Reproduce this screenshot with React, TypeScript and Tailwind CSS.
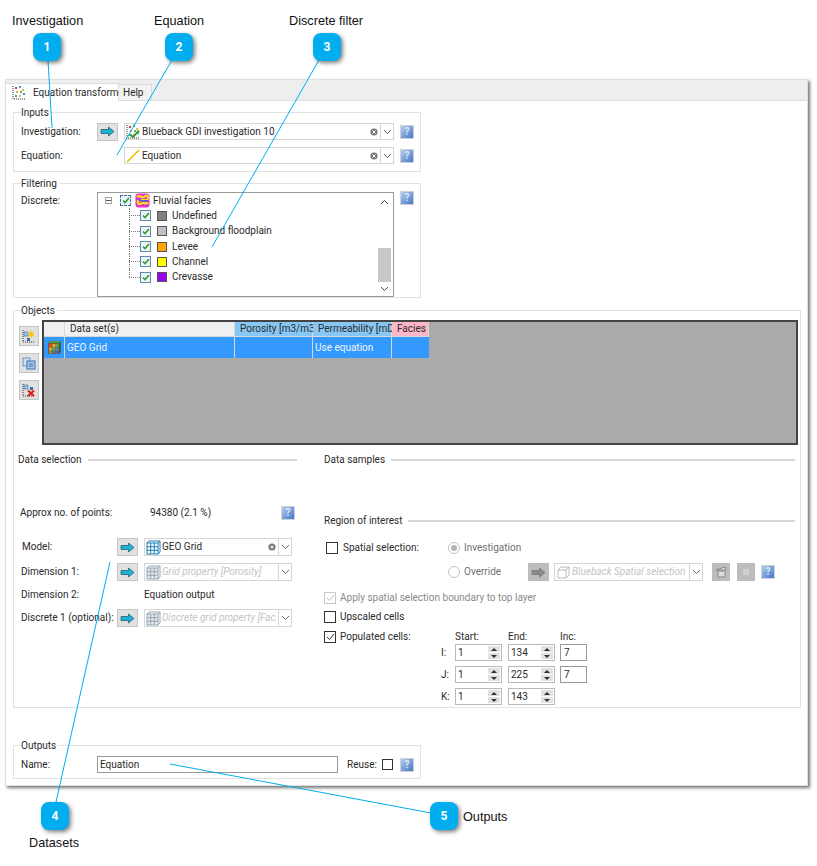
import React from "react";

const Help = () => (
  <div className="w-[14px] h-[14px] shrink-0 border border-[#d0d2d6] bg-gradient-to-br from-[#b4cbee] to-[#4478c8] flex items-center justify-center text-[10px] leading-none font-bold text-[#dfe8f6]">?</div>
);

const Arrow = ({ grey = false }: { grey?: boolean }) => (
  <div className={`w-[21px] h-[18px] shrink-0 border flex items-center justify-center ${grey ? "bg-[#bdbdbd] border-[#bdbdbd]" : "bg-[#e1e1e1] border-[#c4c4c4]"}`}>
    <svg width="15" height="11" viewBox="0 0 15 11">
      <path d="M1 3.5H8.5V1L14 5.5L8.5 10V7.5H1Z" fill={grey ? "#8a8a8a" : "#19b5d8"} stroke={grey ? "#777" : "#2b5f70"} strokeWidth="0.8" />
    </svg>
  </div>
);

const Clear = () => (
  <svg width="8" height="8" viewBox="0 0 8 8" className="shrink-0">
    <circle cx="4" cy="4" r="3.6" fill="#777" />
    <path d="M2.5 2.5L5.5 5.5M5.5 2.5L2.5 5.5" stroke="#fff" strokeWidth="1" />
  </svg>
);

const Chevron = ({ color = "#666" }: { color?: string }) => (
  <svg width="9" height="6" viewBox="0 0 9 6">
    <path d="M1 1L4.5 4.5L8 1" fill="none" stroke={color} strokeWidth="1" />
  </svg>
);

const InvestigationIcon = ({ tick = true }: { tick?: boolean }) => (
  <svg width="15" height="15" viewBox="0 0 15 15" className="shrink-0">
    <path d="M1 1V14H14" fill="none" stroke="#333" strokeWidth="1" strokeDasharray="1 1" />
    <rect x="3" y="2" width="2" height="2" fill="#e23b3b" />
    <rect x="7" y="1" width="2" height="2" fill="#35a6d8" />
    <rect x="10" y="4" width="2" height="2" fill="#e5c12d" />
    <rect x="4" y="6" width="2" height="2" fill="#f0a030" />
    <rect x="8" y="6" width="2" height="2" fill="#6ab04c" />
    <rect x="11" y="8" width="2" height="2" fill="#3c8fd0" />
    <rect x="3" y="10" width="2" height="2" fill="#35a6d8" />
    <rect x="7" y="10" width="2" height="2" fill="#e5c12d" />
    {tick && <path d="M4 10.5L7 13L13 6.5" fill="none" stroke="#3f9f3a" strokeWidth="2" />}
  </svg>
);

const FluvialIcon = () => (
  <svg width="15" height="15" viewBox="0 0 15 15" className="shrink-0">
    <rect x="0.5" y="0.5" width="14" height="14" rx="3" fill="#e62fd0" />
    <path d="M2 4C5 1 7 6 9 4S13 2 13 5 9 7 7 7 2 7 3 10 7 9 9 10 12 9 13 11" fill="none" stroke="#f7e017" strokeWidth="2.2" />
    <path d="M3 7C5 6 6 8 8 8S11 7 13 8" fill="none" stroke="#3a55d9" strokeWidth="1.4" />
  </svg>
);

const GridIcon = ({ faded = false }: { faded?: boolean }) => {
  const c = faded ? "#7b929c" : "#1b7fb5";
  return (
    <svg width="15" height="15" viewBox="0 0 15 15" className="shrink-0" opacity={faded ? 0.8 : 1}>
      <rect x="1" y="3" width="11" height="11" fill={faded ? "#dfe5e8" : "#fff"} stroke={c} />
      <path d="M4.7 3V14M8.3 3V14M1 6.7H12M1 10.3H12M1 3L3 1H14V12L12 14M12 3L14 1" fill="none" stroke={c} strokeWidth="1" />
    </svg>
  );
};

const CubeIcon = () => (
  <svg width="15" height="15" viewBox="0 0 15 15" className="shrink-0">
    <rect x="1" y="3" width="11" height="11" fill="#7a5a2a" />
    <rect x="2" y="4" width="3" height="3" fill="#d94a2b" />
    <rect x="5.5" y="4" width="3" height="3" fill="#e0b13a" />
    <rect x="9" y="4" width="2.5" height="3" fill="#5fae3e" />
    <rect x="2" y="7.5" width="3" height="3" fill="#e0a03a" />
    <rect x="5.5" y="7.5" width="3" height="3" fill="#62b04a" />
    <rect x="9" y="7.5" width="2.5" height="3" fill="#3d8fd0" />
    <rect x="2" y="11" width="3" height="2.5" fill="#5fae3e" />
    <rect x="5.5" y="11" width="3" height="2.5" fill="#3b6fd0" />
    <rect x="9" y="11" width="2.5" height="2.5" fill="#7b4bc0" />
    <path d="M1 3L3 1H14L12 3Z" fill="#4f9a45" />
    <path d="M12 3L14 1V12L12 14Z" fill="#2f6a4a" />
  </svg>
);

const Combo = ({ w, icon, text, clear = false, muted = false, h = "h-[18px]" }: { w: string; icon: React.ReactNode; text: string; clear?: boolean; muted?: boolean; h?: string }) => (
  <div className={`${w} ${h} shrink-0 border border-[#d6d6d6] bg-white flex items-center`}>
    <div className="flex-1 min-w-0 flex items-center gap-[1px] pl-[1px] pr-[2px]">
      {icon}
      <span className={`flex-1 min-w-0 whitespace-nowrap overflow-hidden ${muted ? "italic text-[#c4c4c4]" : ""}`}>{text}</span>
      {clear && <Clear />}
    </div>
    <div className="w-[13px] h-full border-l border-[#d6d6d6] flex items-center justify-center shrink-0"><Chevron /></div>
  </div>
);

const Group = ({ title, className, children }: { title: string; className: string; children: React.ReactNode }) => (
  <div className={`relative border border-[#e2e2e2] ${className}`}>
    <span className="absolute left-[7px] -top-[6px] bg-white pr-[2px] leading-[12px]">{title}</span>
    {children}
  </div>
);

const TreeCheck = ({ dashed = false }: { dashed?: boolean }) => (
  <div className={`w-[11px] h-[11px] shrink-0 flex items-center justify-center bg-[#eef3f6] border ${dashed ? "border-dashed border-[#3a6ea5]" : "border-[#5f89a8]"}`}>
    <svg width="8" height="7" viewBox="0 0 8 7"><path d="M1 3.5L3 5.5L7 1" fill="none" stroke="#2f9a3a" strokeWidth="1.6" /></svg>
  </div>
);

const TreeItem = ({ color, label, last = false }: { color: string; label: string; last?: boolean }) => (
  <div className="h-[15.3px] flex items-center relative">
    <div className={`absolute left-[30px] top-0 w-0 border-l border-dotted border-[#777] ${last ? "h-[8px]" : "h-full"}`} />
    <div className="ml-[30px] w-[11px] border-t border-dotted border-[#777]" />
    <TreeCheck />
    <div className="w-[10px] h-[10px] ml-[6px] border border-[#555]" style={{ background: color }} />
    <span className="ml-[5px]">{label}</span>
  </div>
);

const Check = ({ checked = false, disabled = false }: { checked?: boolean; disabled?: boolean }) => (
  <div className={`w-[12px] h-[12px] shrink-0 bg-white border flex items-center justify-center ${disabled ? "border-[#c8c8c8]" : "border-[#333]"}`}>
    {checked && <svg width="9" height="8" viewBox="0 0 9 8"><path d="M1 4L3.5 6.5L8 1" fill="none" stroke={disabled ? "#bbb" : "#333"} strokeWidth="1" /></svg>}
  </div>
);

const Radio = ({ on = false }: { on?: boolean }) => (
  <div className="w-[12px] h-[12px] shrink-0 rounded-full border border-[#c4c4c4] bg-white flex items-center justify-center">
    {on && <div className="w-[6px] h-[6px] rounded-full bg-[#b4b4b4]" />}
  </div>
);

const Spin = ({ v }: { v: string }) => (
  <div className="w-[47px] h-[17px] shrink-0 border border-[#b8b8b8] bg-white flex items-center pl-[2px]">
    <span className="flex-1">{v}</span>
    <div className="w-[12px] h-full mr-[1px] flex flex-col gap-[1px] py-[1px]">
      <div className="flex-1 bg-[#e1e1e1] flex items-center justify-center"><div className="border-x-[3px] border-x-transparent border-b-[3px] border-b-[#333]" /></div>
      <div className="flex-1 bg-[#e1e1e1] flex items-center justify-center"><div className="border-x-[3px] border-x-transparent border-t-[3px] border-t-[#333]" /></div>
    </div>
  </div>
);

const Inc = () => (
  <div className="w-[27px] h-[17px] shrink-0 border border-[#999] bg-white flex items-center pl-[3px]">7</div>
);

const SpinRow = ({ l, s, e, inc, cls }: { l: string; s: string; e: string; inc: boolean; cls: string }) => (
  <div className={`flex items-center h-[17px] pl-[117px] ${cls}`}>
    <span className="w-[14px]">{l}</span>
    <Spin v={s} />
    <div className="w-[6px]" />
    <Spin v={e} />
    {inc && <div className="w-[5px]" />}
    {inc && <Inc />}
  </div>
);

const Heading = ({ title, cls = "" }: { title: string; cls?: string }) => (
  <div className={`flex items-center h-[14px] gap-[6px] ${cls}`}>
    <span className="whitespace-nowrap">{title}</span>
    <div className="flex-1 h-[2px] bg-[#d8d8d8]" />
  </div>
);

const SideBtn = ({ cls, children }: { cls: string; children: React.ReactNode }) => (
  <div className={`w-[20px] h-[20px] bg-[#e1e1e1] border border-[#c4c4c4] flex items-center justify-center ${cls}`}>{children}</div>
);

const ColHead = ({ w, bg, children }: { w: string; bg: string; children: React.ReactNode }) => (
  <div className={`${w} ${bg} h-full shrink-0 border-r border-[#d8d8d8] flex items-center pl-[5px] whitespace-nowrap`}>{children}</div>
);

const Bubble = ({ n, x, y }: { n: string; x: string; y: string }) => (
  <div className={`absolute ${x} ${y} w-[28px] h-[28px] rounded-[8px] bg-[#00aeef] shadow-[2px_2px_4px_rgba(0,0,0,0.5)] flex items-center justify-center text-white font-bold text-[12px]`}>{n}</div>
);

const Note = ({ text, cls }: { text: string; cls: string }) => (
  <span className={`absolute text-[12.7px] leading-[16px] text-[#111] whitespace-nowrap font-['Liberation_Sans',Arial,sans-serif] ${cls}`}>{text}</span>
);

export default function App() {
  return (
    <div className="relative w-[817px] h-[866px] bg-white overflow-hidden pt-[79px] pl-[5px] text-[10px] leading-[12px] text-[#2a2a2a] font-['Roboto','Liberation_Sans',sans-serif]">
      <div className="w-[803px] h-[707px] bg-white border border-[#e0e0e0] shadow-[2px_2px_3px_#777]">
        {/* Tabs */}
        <div className="h-[21px] bg-[#eeeeee] border-b border-[#dcdcdc] flex items-end">
          <div className="w-[113px] h-[18px] bg-white border-r border-t border-[#dcdcdc] -mb-[1px] flex items-center pl-[6px] gap-[6px]">
            <InvestigationIcon tick={false} />
            <span className="whitespace-nowrap">Equation transformer</span>
          </div>
          <div className="w-[33px] h-[16px] bg-[#f2f2f2] border-r border-t border-[#dcdcdc] flex items-center pl-[4px]">Help</div>
        </div>

        <div className="pl-[7px]">
          {/* Inputs */}
          <Group title="Inputs" className="w-[408px] h-[60px] mt-[11px] pt-[10px] pl-[7px]">
            <div className="flex items-center h-[17px]">
              <span className="w-[76px]">Investigation:</span>
              <Arrow />
              <div className="w-[6px]" />
              <Combo w="w-[270px]" h="h-[17px]" icon={<InvestigationIcon />} text="Blueback GDI investigation 10" clear />
              <div className="w-[6px]" />
              <Help />
            </div>
            <div className="flex items-center h-[17px] mt-[7px]">
              <span className="w-[103px]">Equation:</span>
              <Combo
                w="w-[270px]"
                h="h-[17px]"
                icon={<svg width="15" height="15" viewBox="0 0 15 15" className="shrink-0"><path d="M1 14L13 2" stroke="#f5b800" strokeWidth="1.6" /></svg>}
                text="Equation"
                clear
              />
              <div className="w-[6px]" />
              <Help />
            </div>
          </Group>

          {/* Filtering */}
          <Group title="Filtering" className="w-[408px] h-[115px] mt-[11px] pt-[8px] pl-[7px]">
            <div className="flex items-start">
              <span className="w-[76px] pt-[3px]">Discrete:</span>
              <div className="w-[297px] h-[105px] shrink-0 border border-[#999] pl-[1px] flex">
                <div className="flex-1">
                  <div className="h-[15.3px] flex items-center relative pl-[6px]">
                    <div className="w-[7px] h-[7px] border border-[#9aa5b1] flex items-center justify-center mr-[8px]"><div className="w-[5px] h-[1px] bg-[#555]" /></div>
                    <TreeCheck dashed />
                    <div className="w-[4px]" />
                    <FluvialIcon />
                    <span className="ml-[3px]">Fluvial facies</span>
                  </div>
                  <TreeItem color="#808080" label="Undefined" />
                  <TreeItem color="#c0c0c0" label="Background floodplain" />
                  <TreeItem color="#ffa500" label="Levee" />
                  <TreeItem color="#ffff00" label="Channel" />
                  <TreeItem color="#9900ee" label="Crevasse" last />
                </div>
                <div className="w-[13px] mr-[2px] flex flex-col items-center">
                  <div className="h-[18px] flex items-center justify-center rotate-180"><Chevron color="#444" /></div>
                  <div className="h-[37px]" />
                  <div className="w-full h-[34px] bg-[#c8c8c8]" />
                  <div className="flex-1 flex items-center justify-center"><Chevron color="#444" /></div>
                </div>
              </div>
              <div className="w-[6px]" />
              <div className="-mt-[1px]"><Help /></div>
            </div>
          </Group>

          {/* Objects */}
          <Group title="Objects" className="w-[788px] h-[398px] mt-[12px] pt-[9px]">
            <div className="flex pl-[5px]">
              <div className="w-[20px] pt-[6px]">
                <SideBtn cls="">
                  <svg width="14" height="14" viewBox="0 0 14 14"><path d="M1 1V13H13" fill="none" stroke="#333" strokeDasharray="1 1" /><rect x="2" y="3" width="4" height="4" fill="#9cc3ea" stroke="#3a6ea5" strokeWidth="0.6" /><path d="M9 1L10 4L13 3L11 5.500L13 8L10 7L9 10L8 7L5 8L7 5.500L5 3L8 4Z" fill="#f5c518" /><rect x="5" y="9" width="3" height="3" fill="#3a6ea5" /></svg>
                </SideBtn>
                <SideBtn cls="mt-[7px]">
                  <svg width="14" height="14" viewBox="0 0 14 14"><rect x="1" y="2" width="7" height="8" fill="#cfe0f4" stroke="#6f93bd" /><rect x="5" y="5" width="8" height="8" fill="#a9c7ea" stroke="#3f6ea8" /><path d="M7 8H11M7 10H11" stroke="#3f6ea8" /></svg>
                </SideBtn>
                <SideBtn cls="mt-[7px]">
                  <svg width="14" height="14" viewBox="0 0 14 14"><path d="M1 1V13H13" fill="none" stroke="#333" strokeDasharray="1 1" /><rect x="2" y="2" width="4" height="4" fill="#9cc3ea" stroke="#3a6ea5" strokeWidth="0.6" /><rect x="8" y="4" width="3" height="3" fill="#3a6ea5" /><path d="M6 7.500L12 13M12 7.500L6 13" stroke="#e01818" strokeWidth="2" /></svg>
                </SideBtn>
              </div>
              <div className="w-[756px] h-[125px] ml-[3px] border-2 border-[#444] bg-[#ababab]">
                <div className="flex h-[14px] items-stretch">
                  <ColHead w="w-[21px]" bg="bg-[#f0f0f0]"><span /></ColHead>
                  <ColHead w="w-[170px]" bg="bg-[#f0f0f0]">Data set(s)</ColHead>
                  <ColHead w="w-[78px]" bg="bg-[#87c7f5]">Porosity [m3/m3]</ColHead>
                  <ColHead w="w-[79px]" bg="bg-[#87c7f5]">Permeability [mD]</ColHead>
                  <ColHead w="w-[37px]" bg="bg-[#ffb6c8]">Facies</ColHead>
                </div>
                <div className="flex h-[22px] w-[385px] bg-[#3399ff] text-[#f0f6ff] border-t border-[#d8d8d8]">
                  <div className="w-[21px] border-r border-[#d8d8d8] flex items-center justify-center"><CubeIcon /></div>
                  <div className="w-[170px] border-r border-[#d8d8d8] flex items-center pl-[2px]">GEO Grid</div>
                  <div className="w-[78px] border-r border-[#d8d8d8]" />
                  <div className="w-[79px] border-r border-[#d8d8d8] flex items-center pl-[2px]">Use equation</div>
                </div>
              </div>
            </div>

            <div className="flex mt-[8px] ml-[4px]">
              {/* Data selection */}
              <div className="w-[279px]">
                <Heading title="Data selection" />
                <div className="flex items-center h-[15px] mt-[38px] pl-[2px]">
                  <span className="w-[130px]">Approx no. of points:</span>
                  <span className="w-[131px]">94380 (2.1 %)</span>
                  <Help />
                </div>
                <div className="flex items-center h-[18px] mt-[18px] pl-[4px]">
                  <span className="w-[95px]">Model:</span>
                  <Arrow />
                  <div className="w-[6px]" />
                  <Combo w="w-[148px]" icon={<GridIcon />} text="GEO Grid" clear />
                </div>
                <div className="flex items-center h-[18px] mt-[7px] pl-[3px]">
                  <span className="w-[96px]">Dimension 1:</span>
                  <Arrow />
                  <div className="w-[6px]" />
                  <Combo w="w-[148px]" icon={<GridIcon faded />} text="Grid property [Porosity]" muted />
                </div>
                <div className="flex items-center h-[18px] mt-[5px] pl-[3px]">
                  <span className="w-[123px]">Dimension 2:</span>
                  <span>Equation output</span>
                </div>
                <div className="flex items-center h-[18px] mt-[5px] pl-[3px]">
                  <span className="w-[96px] whitespace-nowrap">Discrete 1 (optional):</span>
                  <Arrow />
                  <div className="w-[6px]" />
                  <Combo w="w-[148px]" icon={<GridIcon faded />} text="Discrete grid property [Facies]" muted />
                </div>
              </div>

              {/* Data samples / region */}
              <div className="w-[471px] ml-[27px]">
                <Heading title="Data samples" />
                <Heading title="Region of interest" cls="mt-[47px]" />
                <div className="flex items-center h-[18px] mt-[11px] pl-[2px]">
                  <Check />
                  <span className="w-[105px] ml-[5px]">Spatial selection:</span>
                  <Radio on />
                  <span className="ml-[4px] text-[#707070]">Investigation</span>
                </div>
                <div className="flex items-center h-[18px] mt-[6px] pl-[124px]">
                  <Radio />
                  <span className="w-[64px] ml-[4px] text-[#707070]">Override</span>
                  <Arrow grey />
                  <div className="w-[5px]" />
                  <Combo
                    w="w-[149px]"
                    icon={<svg width="15" height="15" viewBox="0 0 15 15" className="shrink-0"><path d="M2 5H10V13H2ZM2 5L5 2H13V10L10 13M10 5L13 2" fill="none" stroke="#bbb" /></svg>}
                    text="Blueback Spatial selection"
                    muted
                  />
                  <div className="w-[9px]" />
                  <div className="w-[18px] h-[18px] bg-[#bdbdbd] flex items-center justify-center">
                    <svg width="14" height="14" viewBox="0 0 14 14"><path d="M2 5L11 2L12 5ZM4 6H11V12H4Z" fill="#ddd" stroke="#888" /></svg>
                  </div>
                  <div className="w-[7px]" />
                  <div className="w-[18px] h-[18px] bg-[#bdbdbd] flex items-center justify-center"><div className="w-[6px] h-[6px] bg-[#d0d0d0]" /></div>
                  <div className="w-[6px]" />
                  <Help />
                </div>
                <div className="flex items-center h-[18px] mt-[8px]">
                  <Check checked disabled />
                  <span className="ml-[4px] text-[#8a8a8a]">Apply spatial selection boundary to top layer</span>
                </div>
                <div className="flex items-center h-[18px] mt-[1px]">
                  <Check />
                  <span className="ml-[4px]">Upscaled cells</span>
                </div>
                <div className="flex items-center h-[14px] mt-[4px]">
                  <Check checked />
                  <span className="w-[115px] ml-[4px]">Populated cells:</span>
                  <span className="w-[53px]">Start:</span>
                  <span className="w-[52px]">End:</span>
                  <span>Inc:</span>
                </div>
                <SpinRow l="I:" s="1" e="134" inc cls="" />
                <SpinRow l="J:" s="1" e="225" inc cls="mt-[5px]" />
                <SpinRow l="K:" s="1" e="143" inc={false} cls="mt-[5px]" />
              </div>
            </div>
          </Group>

          {/* Outputs */}
          <Group title="Outputs" className="w-[408px] h-[34px] mt-[37px] pt-[10px] pl-[7px]">
            <div className="flex items-center h-[17px]">
              <span className="w-[76px]">Name:</span>
              <div className="w-[241px] h-[17px] shrink-0 border border-[#999] flex items-center pl-[2px]">Equation</div>
              <span className="w-[35px] ml-[9px]">Reuse:</span>
              <div className="w-[11px] h-[11px] border border-[#333] shrink-0" />
              <div className="w-[7px]" />
              <Help />
            </div>
          </Group>
        </div>
      </div>

      {/* Annotation overlay */}
      <svg className="absolute left-0 top-0 pointer-events-none" width="817" height="866" viewBox="0 0 817 866">
        <path d="M48 60L52 128M172 60L117 155M319 60L212 247M56 802L110 562M431 813L170 764" stroke="#00aeef" strokeWidth="1" fill="none" />
      </svg>
      <Note text="Investigation" cls="left-[12px] top-[13px]" />
      <Note text="Equation" cls="left-[154px] top-[13px]" />
      <Note text="Discrete filter" cls="left-[289px] top-[13px]" />
      <Note text="Outputs" cls="left-[463px] top-[809px]" />
      <Note text="Datasets" cls="left-[29px] top-[835px]" />
      <Bubble n="1" x="left-[33px]" y="top-[33px]" />
      <Bubble n="2" x="left-[165px]" y="top-[33px]" />
      <Bubble n="3" x="left-[313px]" y="top-[33px]" />
      <Bubble n="4" x="left-[41px]" y="top-[802px]" />
      <Bubble n="5" x="left-[430px]" y="top-[802px]" />
    </div>
  );
}
